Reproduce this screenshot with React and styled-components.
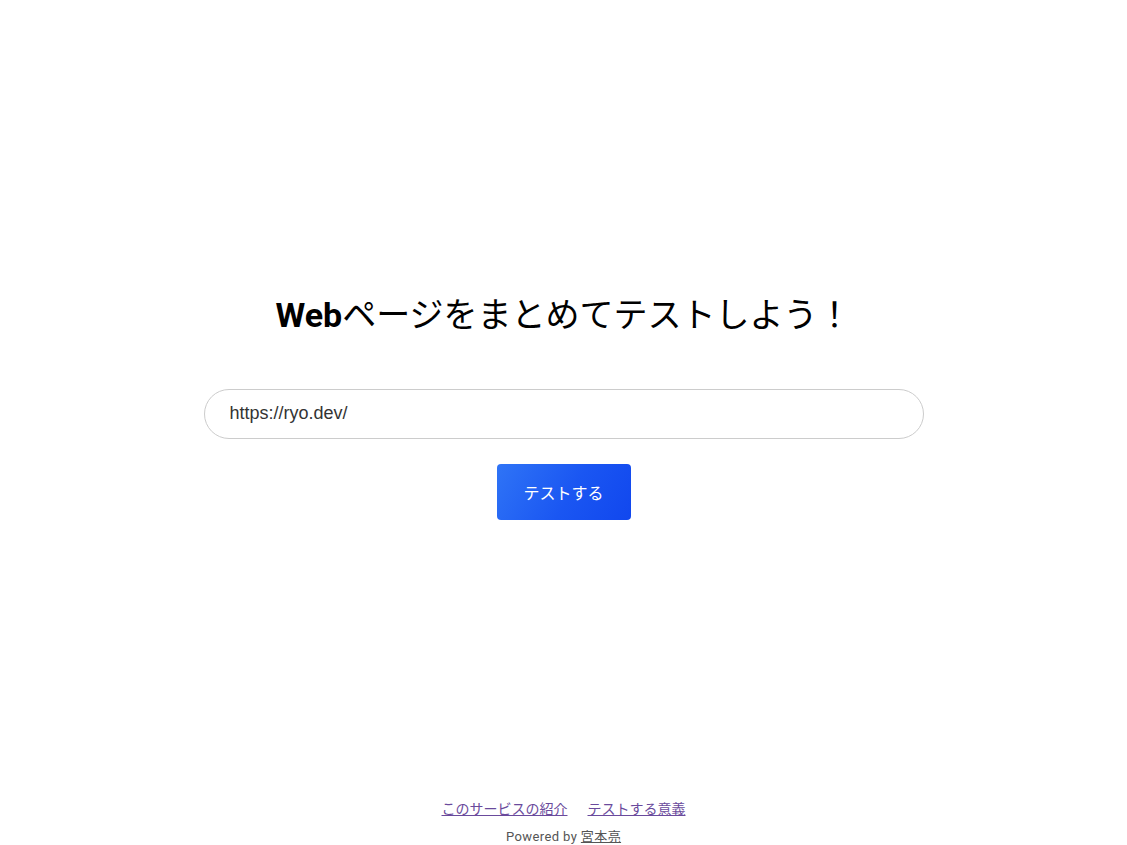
import styled, { createGlobalStyle } from 'styled-components';

const GlobalStyle = createGlobalStyle`
    html, body {
        margin: 0;
        padding: 0;
        background: #fff;
    }
    body {
        font-family: 'Liberation Sans', Arial, 'Noto Sans CJK JP', sans-serif;
    }
`

const Page = styled.div`
    display: flex;
    flex-direction: column;
    min-height: 100vh;
`

const Main = styled.main`
    flex: 1;
    display: flex;
    flex-direction: column;
    align-items: center;
    justify-content: center;
    padding-top: 14px;
`

const Title = styled.h1`
    margin: 0 0 52px;
    font-size: 34px;
    line-height: 44px;
    color: #000;
    font-family: 'Roboto', 'Noto Sans CJK JP', sans-serif;
    font-weight: 700;
    .ja{
        font-weight: 400;
    }
`

const UrlInput = styled.input`
    box-sizing: border-box;
    width: 720px;
    height: 50px;
    padding: 0 25px;
    border: 1px solid #ccc;
    border-radius: 25px;
    font-family: 'Liberation Sans', Arial, sans-serif;
    font-size: 18px;
    color: #333;
    outline: none;
`

const SubmitButton = styled.button`
    margin-top: 25px;
    width: 134px;
    height: 56px;
    border: none;
    border-radius: 4px;
    background: linear-gradient(120deg, #2f74f6 0%, #1a56f2 55%, #1147ee 100%);
    color: #fff;
    font-family: 'Noto Sans CJK JP', sans-serif;
    font-size: 16px;
    cursor: pointer;
`

const Footer = styled.footer`
    display: flex;
    flex-direction: column;
    align-items: center;
    .links{
        display: flex;
        gap: 20px;
        a{
            color: #6a4a9c;
            font-family: 'Noto Sans CJK JP', sans-serif;
            font-size: 14px;
            line-height: 20px;
        }
    }
    .powered{
        margin-top: 11px;
        font-family: 'Roboto', 'Noto Sans CJK JP', sans-serif;
        font-size: 13px;
        line-height: 16px;
        color: #555;
        letter-spacing: 0.4px;
        a{
            color: #555;
        }
    }
`

export default function App() {
    return (
        <Page>
            <GlobalStyle />
            <Main>
                <Title>
                    Web<span className="ja">ページをまとめてテストしよう！</span>
                </Title>
                <UrlInput type="text" defaultValue="https://ryo.dev/" />
                <SubmitButton>テストする</SubmitButton>
            </Main>
            <Footer>
                <div className="links">
                    <a href="#about">このサービスの紹介</a>
                    <a href="#why">テストする意義</a>
                </div>
                <div className="powered">
                    Powered by <a href="#author">宮本亮</a>
                </div>
            </Footer>
        </Page>
    )
}
